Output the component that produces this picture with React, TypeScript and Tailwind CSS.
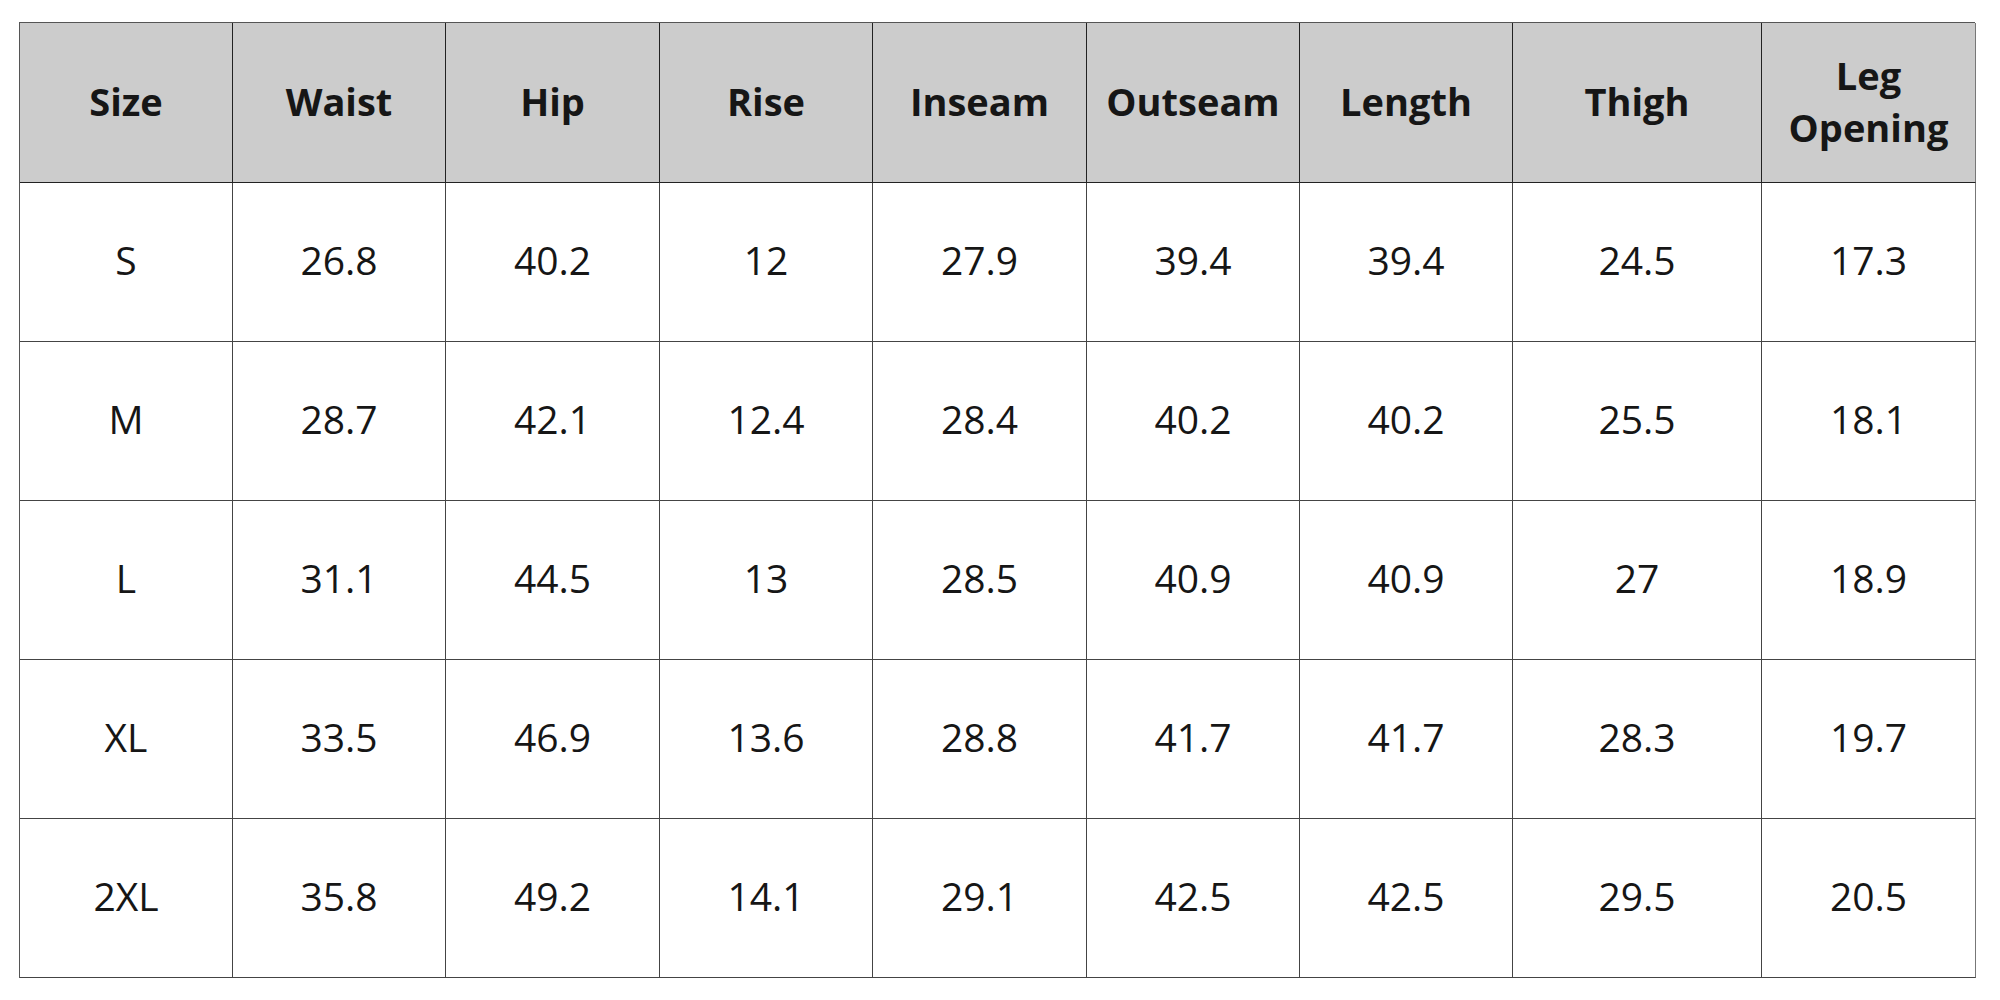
const headers = ['Size', 'Waist', 'Hip', 'Rise', 'Inseam', 'Outseam', 'Length', 'Thigh', 'Leg Opening'];

const rows: string[][] = [
  ['S', '26.8', '40.2', '12', '27.9', '39.4', '39.4', '24.5', '17.3'],
  ['M', '28.7', '42.1', '12.4', '28.4', '40.2', '40.2', '25.5', '18.1'],
  ['L', '31.1', '44.5', '13', '28.5', '40.9', '40.9', '27', '18.9'],
  ['XL', '33.5', '46.9', '13.6', '28.8', '41.7', '41.7', '28.3', '19.7'],
  ['2XL', '35.8', '49.2', '14.1', '29.1', '42.5', '42.5', '29.5', '20.5'],
];

export default function App() {
  return (
    <div className="h-[1000px] w-[2000px] bg-white pl-[19px] pt-[22px] font-['Open_Sans',sans-serif] text-[#161616]">
      <div className="grid w-[1956px] grid-cols-[213px_213px_214px_213px_214px_213px_213px_249px_214px] border-l border-t border-[#555]">
        {/* Header */}
        {headers.map((h, i) => (
          <div
            key={h}
            className={`flex h-[160px] items-center justify-center border-b border-r border-[#222] bg-[#cccccc] px-2 pb-[3px] text-center text-[38px] font-bold leading-[52px] ${
              i === 8 ? 'border-r-[#777]' : ''
            }`}
          >
            {h === 'Leg Opening' ? (
              <span>
                Leg
                <br />
                Opening
              </span>
            ) : (
              h
            )}
          </div>
        ))}

        {/* Body */}
        {rows.map((row) =>
          row.map((cell, i) => (
            <div
              key={row[0] + i}
              className={`flex h-[159px] items-center justify-center border-b border-r border-[#444] pb-[3px] text-[39px] font-normal ${
                i === 8 ? 'border-r-[#777]' : ''
              }`}
            >
              {cell}
            </div>
          ))
        )}
      </div>
    </div>
  );
}
